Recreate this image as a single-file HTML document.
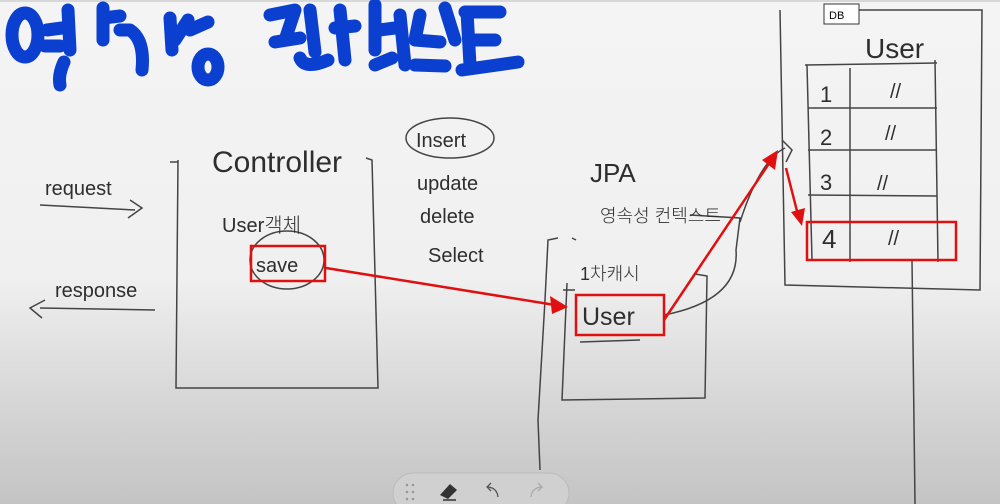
<!DOCTYPE html>
<html><head><meta charset="utf-8"><style>
html,body{margin:0;padding:0}
body{width:1000px;height:504px;overflow:hidden;position:relative;background:linear-gradient(#f4f4f4 0%,#f0f0f0 55%,#d6d6d6 80%,#c4c4c4 100%);font-family:"Liberation Sans",sans-serif}
svg{position:absolute;left:0;top:0}
.h{font-family:"Liberation Sans","Noto Sans CJK KR",sans-serif;fill:#2e2e2e;font-weight:300}
</style></head><body>
<svg width="1000" height="504" viewBox="0 0 1000 504">
<line x1="0" y1="1" x2="1000" y2="1" stroke="#bbb"/>
<g stroke="#0a3fd0" stroke-width="13" fill="none" stroke-linecap="round" stroke-linejoin="round">
<ellipse cx="25" cy="35" rx="13" ry="22"/>
<path d="M47 30 L62 28 M45 46 L60 46 M68 10 L70 50"/>
<path d="M64 62 Q58 75 60 85"/>
<path d="M103 8 L103 40 M103 18 L120 16 M120 30 L130 30 Q145 40 142 70"/>
<path d="M170 18 L172 50 M175 40 L188 20 M190 30 L208 22"/>
<ellipse cx="208" cy="67" rx="10" ry="13"/>
<path d="M270 15 L295 10 L285 40 M275 42 L300 38 M310 10 L315 52"/>
<path d="M300 58 Q305 70 328 60 M340 10 L345 60 M335 28 L355 26"/>
<path d="M375 5 L375 50 M380 30 L395 28 M400 15 L405 65 M392 58 L375 65"/>
<path d="M420 15 L415 40 L440 42 M445 8 L455 40 M415 65 L445 66"/>
<path d="M465 12 L500 12 M467 12 L470 65 M470 40 L495 40 M462 70 L518 62"/>
</g>
<g stroke="#444" stroke-width="1.5" fill="none">
<path d="M170 162 L178 162 M178 160 L176 388 L378 388 L372 160 L366 158"/>
<path d="M40 205 L135 210 M130 200 L142 208 L128 218"/>
<path d="M155 310 L40 308 M45 300 L30 308 L42 318"/>
<ellipse cx="287" cy="260" rx="37" ry="29"/>
<ellipse cx="450" cy="138" rx="44" ry="20"/>
<path d="M558 238 L548 240 L545 300 L538 420 L540 470 M576 240 L572 238"/>
<path d="M567 283 L562 400 L705 398 L707 276 L695 274"/>
<path d="M563 290 L575 290"/>
<path d="M580 342 L640 340"/>
<path d="M664 315 Q740 300 736 250 L740 218 L690 215"/>
<path d="M740 222 Q760 160 785 148"/>
<path d="M780 10 L785 285 L980 290 L982 10 L838 10"/>
<path d="M805 65 L937 63 M807 65 L812 260 M850 68 L850 262 M935 60 L938 262 M808 108 L937 108 M808 150 L937 150 M808 195 L937 196"/>
<path d="M912 260 L915 504"/>
<path d="M782 140 L792 150 L786 162"/>
</g>
<g stroke="#e01010" stroke-width="2.5" fill="none">
<rect x="251" y="246" width="74" height="35"/>
<rect x="576" y="295" width="88" height="40"/>
<rect x="807" y="222" width="149" height="38"/>
<path d="M326 268 L555 305"/>
<path d="M664 320 L770 162"/>
<path d="M786 168 L798 215"/>
</g>
<g fill="#e01010">
<polygon points="568,307 550,296 552,314"/>
<polygon points="778,150 762,160 775,170"/>
<polygon points="802,226 791,212 805,208"/>
</g>
<g class="h" font-size="30">
<text x="212" y="172">Controller</text>
<text x="590" y="182" font-size="26">JPA</text>
<text x="865" y="58" font-size="28">User</text>
</g>
<g class="h" font-size="20">
<text x="45" y="195">request</text>
<text x="55" y="297">response</text>
<text x="222" y="232">User객체</text>
<text x="256" y="272">save</text>
<text x="416" y="147">Insert</text>
<text x="417" y="190">update</text>
<text x="420" y="223">delete</text>
<text x="428" y="262">Select</text>
<text x="600" y="222" font-size="18">영속성 컨텍스트</text>
<text x="580" y="280" font-size="18">1차캐시</text>
<text x="582" y="325" font-size="25">User</text>
<text x="820" y="102" font-size="22">1</text>
<text x="890" y="98">//</text>
<text x="820" y="145" font-size="22">2</text>
<text x="885" y="140">//</text>
<text x="820" y="190" font-size="22">3</text>
<text x="877" y="190">//</text>
<text x="822" y="248" font-size="26">4</text>
<text x="888" y="245">//</text>
</g>
<rect x="824" y="4" width="35" height="20" fill="#fff" stroke="#333"/>
<text x="829" y="19" font-size="11" fill="#000">DB</text>
<rect x="393" y="473" width="176" height="40" rx="20" fill="#d0d0d0" stroke="#bbb"/>
<g fill="#999"><circle cx="407" cy="485" r="1.3"/><circle cx="413" cy="485" r="1.3"/><circle cx="407" cy="492" r="1.3"/><circle cx="413" cy="492" r="1.3"/><circle cx="407" cy="499" r="1.3"/><circle cx="413" cy="499" r="1.3"/></g>
<path d="M440 495 L450 484 L457 490 L448 499 Z" fill="#333"/><line x1="443" y1="500" x2="456" y2="500" stroke="#333" stroke-width="1.5"/>
<path d="M498 497 Q497 488 488 487 M491 483 L487 487 L491 491" stroke="#555" stroke-width="1.3" fill="none"/>
<path d="M531 497 Q532 488 541 487 M538 483 L542 487 L538 491" stroke="#aaa" stroke-width="1.3" fill="none"/>
</svg>
</body></html>
